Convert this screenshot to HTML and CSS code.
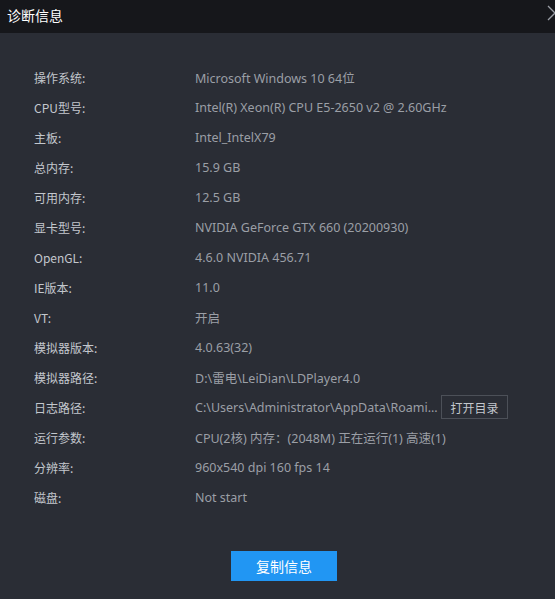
FILE: index.html
```html
<!DOCTYPE html>
<html lang="zh">
<head>
<meta charset="utf-8">
<link rel="stylesheet" href="styles.css">
</head>
<body>
<div class="window">
  <div class="titlebar">
    <span class="title">诊断信息</span>
    <svg class="close" width="16" height="16" viewBox="0 0 16 16"><path d="M1 1 L15 15 M15 1 L1 15" stroke="#9a9ea6" stroke-width="1.3" fill="none"/></svg>
  </div>
  <div class="content">
    <div class="rows">
      <div class="row"><span class="label">操作系统:</span><span class="value">Microsoft Windows 10 64位</span></div>
      <div class="row"><span class="label">CPU型号:</span><span class="value">Intel(R) Xeon(R) CPU E5-2650 v2 @ 2.60GHz</span></div>
      <div class="row"><span class="label">主板:</span><span class="value">Intel_IntelX79</span></div>
      <div class="row"><span class="label">总内存:</span><span class="value">15.9 GB</span></div>
      <div class="row"><span class="label">可用内存:</span><span class="value">12.5 GB</span></div>
      <div class="row"><span class="label">显卡型号:</span><span class="value">NVIDIA GeForce GTX 660 (20200930)</span></div>
      <div class="row"><span class="label">OpenGL:</span><span class="value">4.6.0 NVIDIA 456.71</span></div>
      <div class="row"><span class="label">IE版本:</span><span class="value">11.0</span></div>
      <div class="row"><span class="label">VT:</span><span class="value">开启</span></div>
      <div class="row"><span class="label">模拟器版本:</span><span class="value">4.0.63(32)</span></div>
      <div class="row"><span class="label">模拟器路径:</span><span class="value">D:\雷电\LeiDian\LDPlayer4.0</span></div>
      <div class="row"><span class="label">日志路径:</span><span class="value path">C:\Users\Administrator\AppData\Roami...</span><button class="open-btn">打开目录</button></div>
      <div class="row"><span class="label">运行参数:</span><span class="value">CPU(2核) 内存：(2048M) 正在运行(1) 高速(1)</span></div>
      <div class="row"><span class="label">分辨率:</span><span class="value">960x540 dpi 160 fps 14</span></div>
      <div class="row"><span class="label">磁盘:</span><span class="value">Not start</span></div>
    </div>
    <div class="actions">
      <button class="copy-btn">复制信息</button>
    </div>
  </div>
</div>
</body>
</html>
```
FILE: styles.css
```css
html, body {
  margin: 0;
  padding: 0;
  background: #2a2d35;
}
body {
  font-family: "Noto Sans", "Noto Sans CJK SC", sans-serif;
  font-size: 12px;
}
.window {
  width: 555px;
  height: 599px;
  overflow: hidden;
  background: #2a2d35;
}
.titlebar {
  height: 33px;
  background: #16171b;
  display: flex;
  align-items: center;
  justify-content: space-between;
  overflow: hidden;
  position: relative;
}
.title {
  margin-left: 7px;
  margin-top: -4px;
  color: #ffffff;
  font-size: 14px;
  font-family: "Noto Sans CJK SC", sans-serif;
}
.close {
  position: absolute;
  left: 547px;
  top: 5px;
}
.content {
  padding-top: 29px;
}
.rows {
  display: flex;
  flex-direction: column;
}
.row {
  height: 30px;
  display: flex;
  align-items: center;
  padding-left: 34px;
}
.label {
  width: 161px;
  color: #c3c7cd;
  font-family: "Noto Sans CJK SC", sans-serif;
}
.value {
  color: #9b9fa6;
  font-size: 12.5px;
  font-family: "Noto Sans", "Noto Sans CJK SC", sans-serif;
}
.path {
  width: 245px;
  white-space: nowrap;
  overflow: hidden;
}
.open-btn {
  margin-left: 1px;
  width: 67px;
  height: 24px;
  background: transparent;
  border: 1px solid #4c5058;
  color: #c3c7cd;
  font-family: "Noto Sans CJK SC", sans-serif;
  font-size: 12px;
  padding: 0;
}
.actions {
  display: flex;
  justify-content: center;
  padding-top: 39px;
  padding-left: 13px;
}
.copy-btn {
  width: 106px;
  height: 30px;
  background: #2196f3;
  border: none;
  color: #ffffff;
  font-family: "Noto Sans CJK SC", sans-serif;
  font-size: 14px;
  padding: 0;
}
```
